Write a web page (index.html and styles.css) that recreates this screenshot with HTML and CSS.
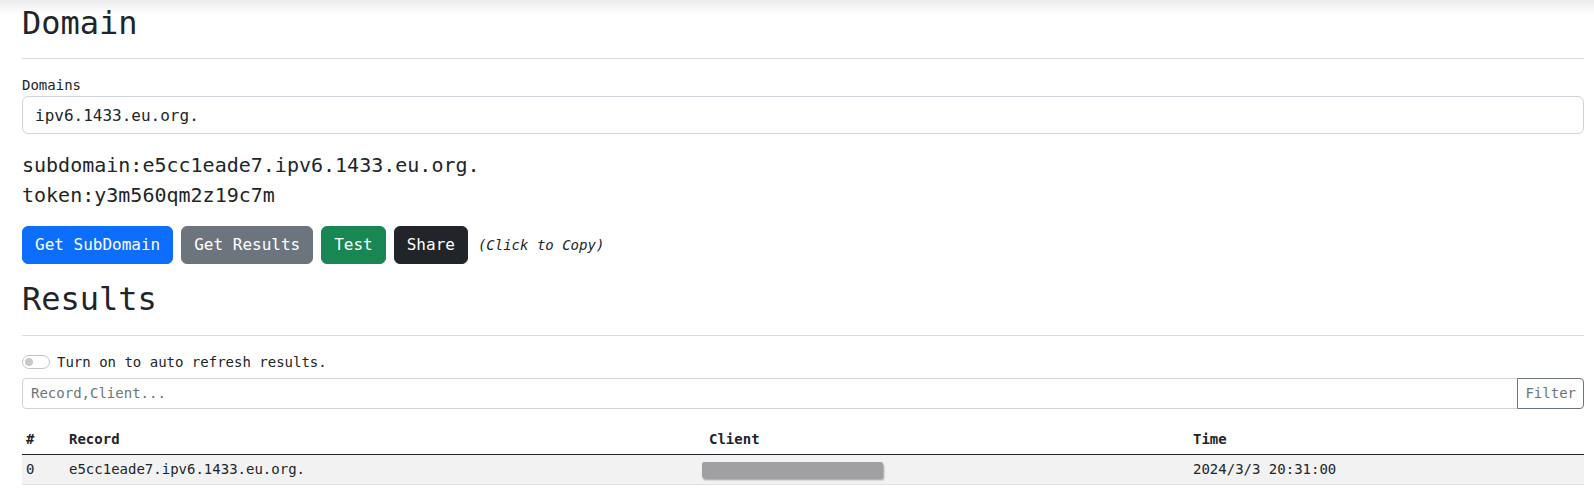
FILE: index.html
```html
<!DOCTYPE html>
<html lang="en">
<head>
<meta charset="utf-8">
<title>Domain</title>
<link rel="stylesheet" href="styles.css">
</head>
<body>
<main class="page">
  <h2 class="title">Domain</h2>
  <hr class="rule">
  <label class="label" for="domain">Domains</label>
  <input id="domain" class="field" type="text" value="ipv6.1433.eu.org.">
  <p class="info">subdomain:e5cc1eade7.ipv6.1433.eu.org.<br>token:y3m560qm2z19c7m</p>
  <div class="actions">
    <button class="btn btn-primary">Get SubDomain</button>
    <button class="btn btn-secondary">Get Results</button>
    <button class="btn btn-success">Test</button>
    <button class="btn btn-dark">Share</button>
    <i class="hint">(Click to Copy)</i>
  </div>
  <h2 class="title">Results</h2>
  <hr class="rule">
  <div class="switch-row">
    <span class="switch"><span class="knob"></span></span>
    <span class="switch-label">Turn on to auto refresh results.</span>
  </div>
  <div class="filter">
    <input class="filter-input" type="text" placeholder="Record,Client...">
    <button class="filter-btn">Filter</button>
  </div>
  <table class="results">
    <thead>
      <tr>
        <th class="c-num">#</th>
        <th class="c-record">Record</th>
        <th class="c-client">Client</th>
        <th class="c-time">Time</th>
      </tr>
    </thead>
    <tbody>
      <tr>
        <td>0</td>
        <td>e5cc1eade7.ipv6.1433.eu.org.</td>
        <td class="client-cell"><span class="redact"></span></td>
        <td>2024/3/3 20:31:00</td>
      </tr>
    </tbody>
  </table>
</main>
</body>
</html>
```

FILE: styles.css
```css
* { box-sizing: border-box; }

html, body {
  margin: 0;
  padding: 0;
}

body {
  font-family: "DejaVu Sans Mono", "Liberation Mono", monospace;
  font-size: 14px;
  line-height: 1.5;
  color: #212529;
  background: #fff linear-gradient(#ebebeb, #ffffff 14px) no-repeat;
}

.page {
  padding: 4px 10px 0 22px;
}

.title {
  margin: 0;
  font-size: 32px;
  font-weight: 400;
  line-height: 1.2;
}

.rule {
  margin: 16px 0;
  border: 0;
  border-top: 1px solid #d9dadb;
  height: 0;
}

.label {
  display: block;
  font-size: 14px;
  line-height: 21px;
}

.field {
  display: block;
  width: 100%;
  height: 38px;
  padding: 6px 12px;
  font: inherit;
  font-size: 16px;
  line-height: 24px;
  color: #212529;
  border: 1px solid #ced4da;
  border-radius: 6px;
  background: #fff;
  margin: 0 0 16px;
}

.info {
  margin: 0 0 16px;
  font-size: 20px;
  line-height: 30px;
}

.actions {
  display: flex;
  align-items: center;
  gap: 8px;
  margin-bottom: 16px;
}

.btn {
  font: inherit;
  font-size: 16px;
  line-height: 24px;
  padding: 6px 12px;
  border: 1px solid transparent;
  border-radius: 6px;
  color: #fff;
  height: 38px;
}

.btn-primary { background: #0d6efd; border-color: #0d6efd; }
.btn-secondary { background: #6c757d; border-color: #6c757d; }
.btn-success { background: #198754; border-color: #198754; }
.btn-dark { background: #212529; border-color: #212529; }

.hint {
  margin-left: 2px;
  font-size: 14px;
  font-style: italic;
}

.switch-row {
  display: flex;
  align-items: flex-start;
  min-height: 24px;
  margin-bottom: 2px;
}

.switch {
  position: relative;
  width: 28px;
  height: 14px;
  margin-top: 3.5px;
  margin-right: 7px;
  border: 1px solid #c4c4c4;
  border-radius: 7px;
  background: #fff;
  flex: none;
}

.knob {
  position: absolute;
  left: 2px;
  top: 2px;
  width: 8px;
  height: 8px;
  border-radius: 50%;
  background: #c8c8c8;
}

.switch-label {
  line-height: 21px;
}

.filter {
  display: flex;
  height: 31px;
  margin-bottom: 16px;
}

.filter-input {
  flex: 1;
  min-width: 0;
  font: inherit;
  font-size: 14px;
  line-height: 21px;
  padding: 4px 8px;
  border: 1px solid #ced4da;
  border-radius: 4px 0 0 4px;
  color: #212529;
}

.filter-input::placeholder {
  color: #6c757d;
}

.filter-btn {
  font: inherit;
  font-size: 14px;
  line-height: 21px;
  padding: 4px 7px;
  border: 1px solid #6c757d;
  border-radius: 0 4px 4px 0;
  margin-left: -1px;
  background: #fff;
  color: #6c757d;
}

.results {
  width: 100%;
  border-collapse: collapse;
  table-layout: fixed;
  font-size: 14px;
  line-height: 21px;
}

.results th,
.results td {
  padding: 4px;
  text-align: left;
  border-bottom: 1px solid #dee2e6;
  white-space: nowrap;
}

.results th {
  font-weight: 700;
  border-bottom-color: #212529;
}

.results tbody tr {
  background: #f2f2f2;
}

.c-num { width: 43px; }
.c-record { width: 640px; }
.c-client { width: 484px; }

.client-cell {
  position: relative;
}

.redact {
  position: absolute;
  left: -3px;
  top: 7px;
  width: 181px;
  height: 16px;
  background: #a09fa3;
  border-radius: 2px;
  box-shadow: 1px 2px 2px rgba(0, 0, 0, 0.35);
}
```
